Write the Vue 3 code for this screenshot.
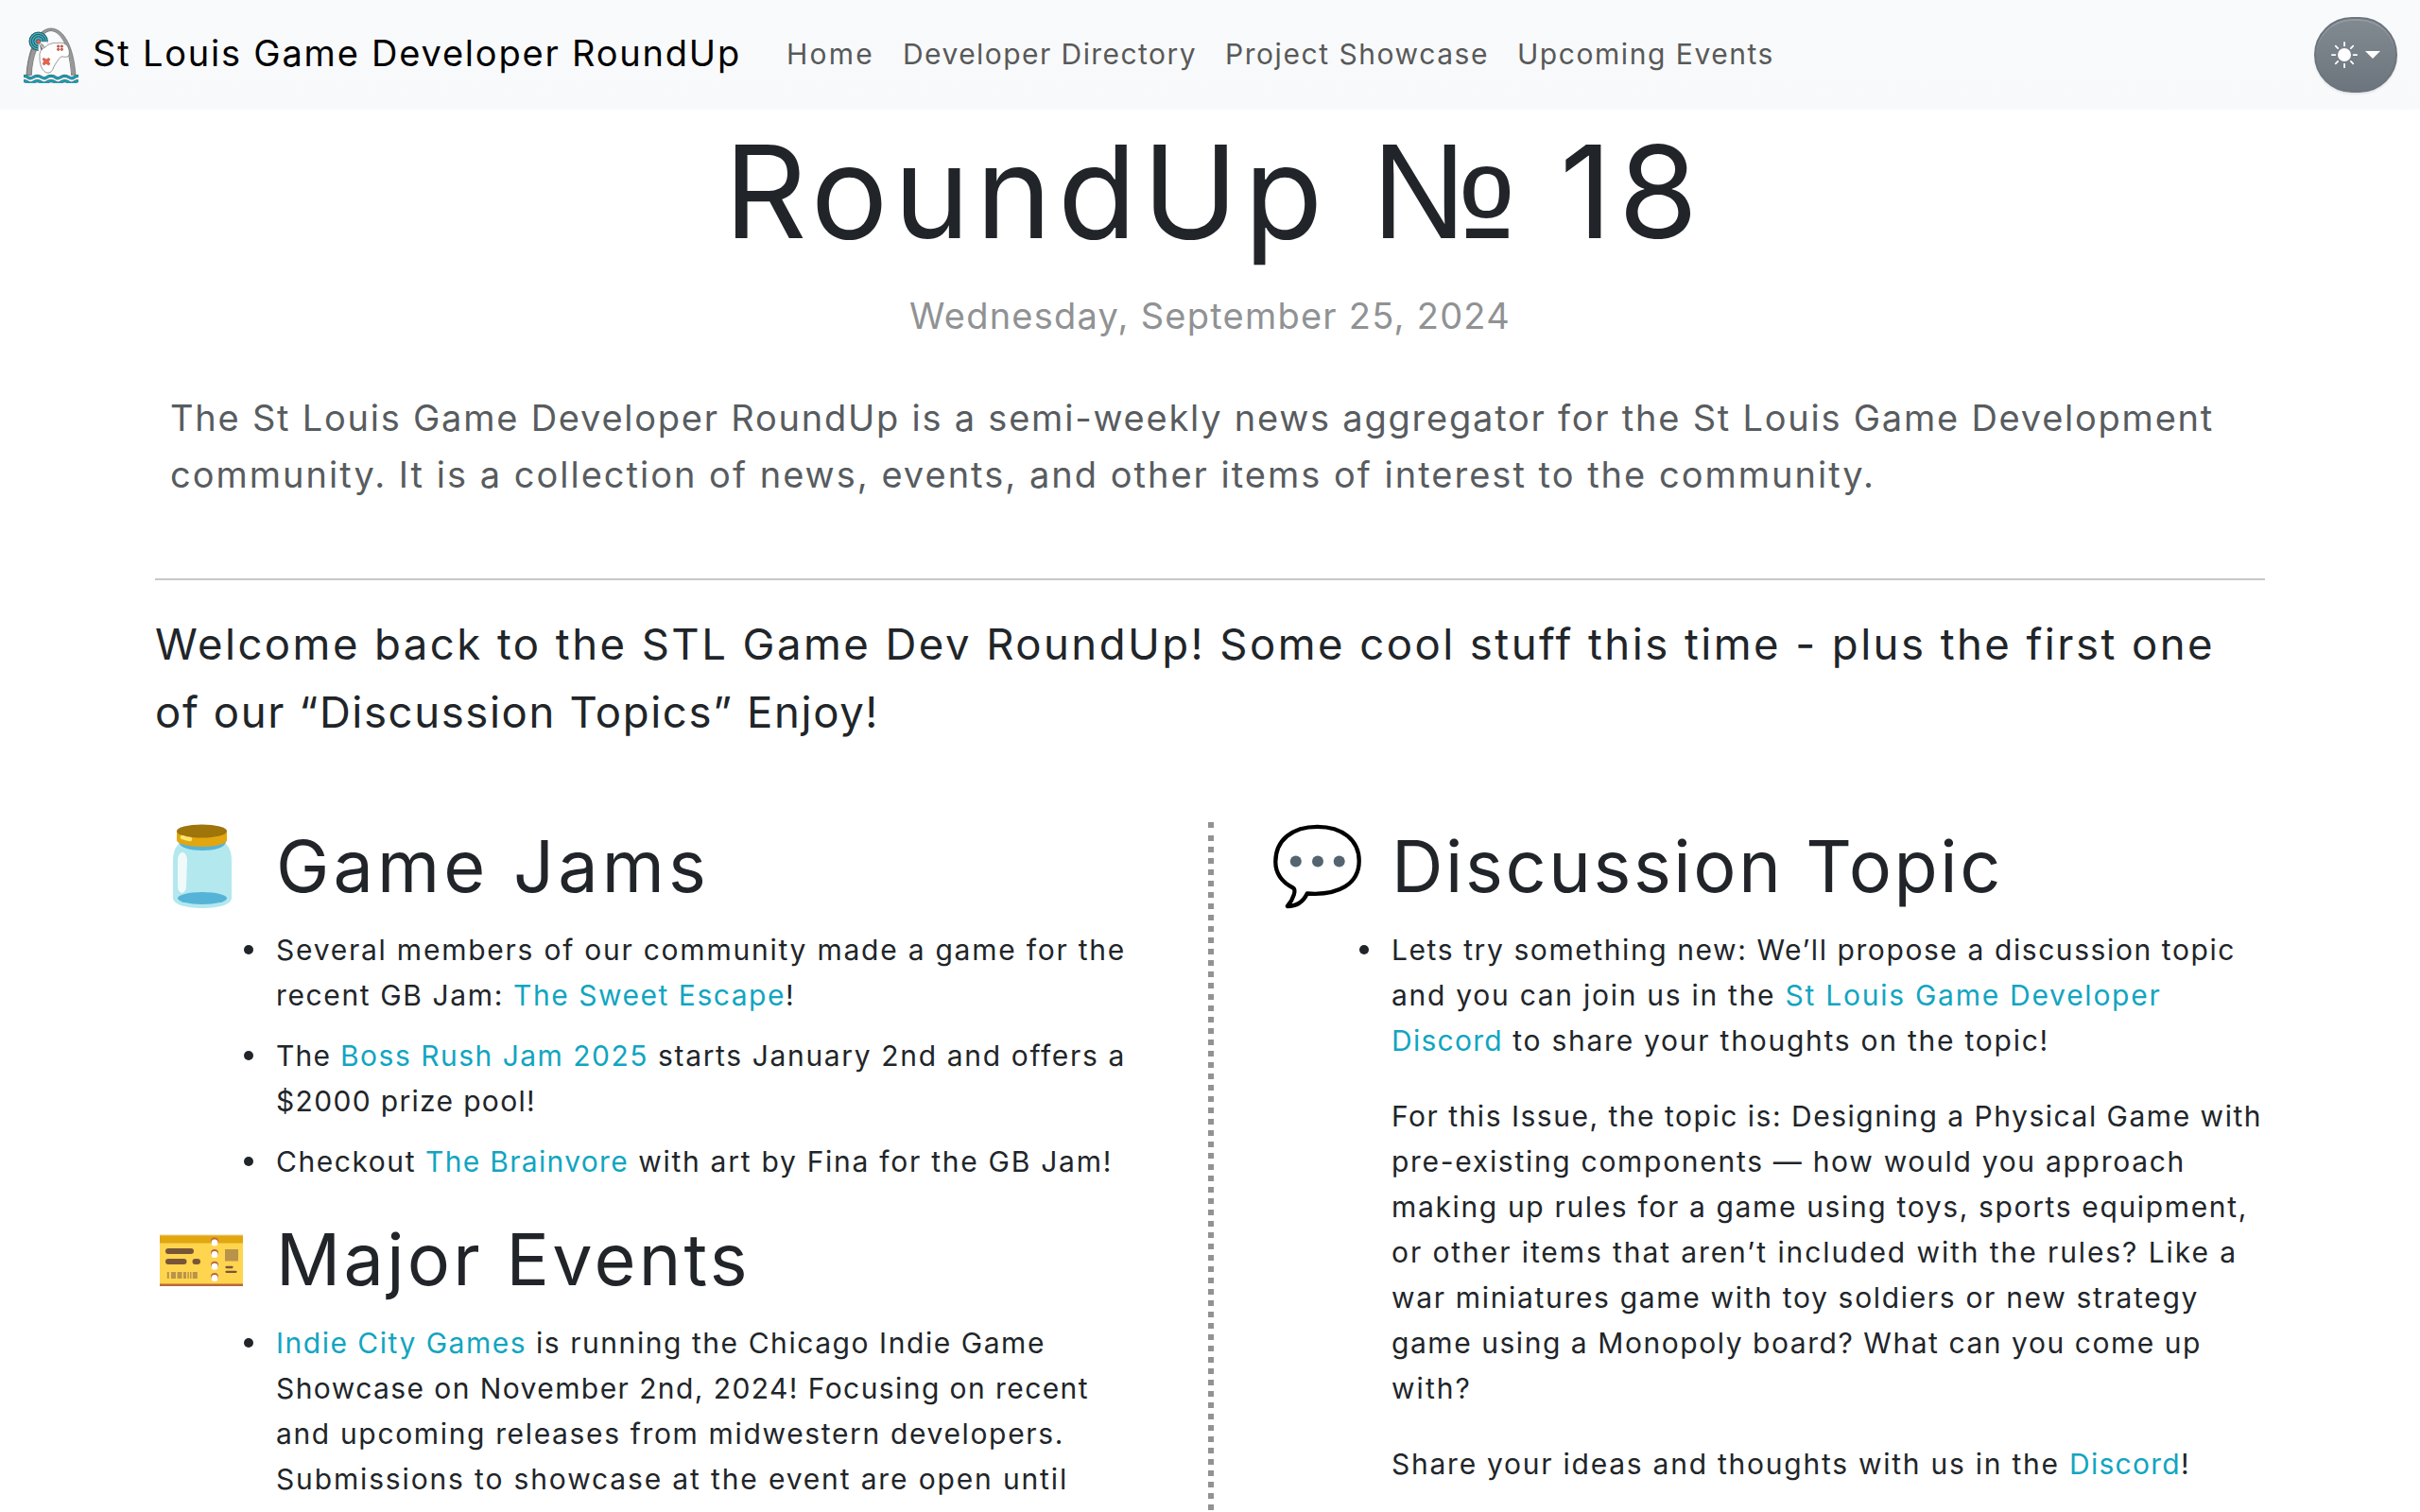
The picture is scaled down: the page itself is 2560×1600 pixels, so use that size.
<script setup>
const nav = [
  { label: 'Home', width: 93 },
  { label: 'Developer Directory', width: 311 },
  { label: 'Project Showcase', width: 279 },
  { label: 'Upcoming Events', width: 272 },
]

const title = [
  { text: 'RoundUp ', width: 684 },
  { text: '№ ', width: 200, sign: true },
  { text: '18', width: 153 },
]

const intro = [
  { text: 'The St Louis Game Developer RoundUp is a semi-weekly news aggregator for the St Louis Game Development', width: 2162 },
  { text: 'community. It is a collection of news, events, and other items of interest to the community.', width: 1804 },
]

const welcome = [
  { text: 'Welcome back to the STL Game Dev RoundUp! Some cool stuff this time - plus the first one', width: 2179 },
  { text: 'of our “Discussion Topics” Enjoy!', width: 766 },
]

const t = (text, width) => ({ text, width })
const a = (text, width) => ({ text, width, link: true })

// Each item holds paragraphs, each paragraph lines, each line its runs of text.
const jams = [
  [[
    [t('Several members of our community made a game for the', 899)],
    [t('recent GB Jam: ', 251), a('The Sweet Escape', 288), t('!', 9)],
  ]],
  [[
    [t('The ', 68), a('Boss Rush Jam 2025', 326), t(' starts January 2nd and offers a', 505)],
    [t('$2000 prize pool!', 275)],
  ]],
  [[
    [t('Checkout ', 158), a('The Brainvore', 215), t(' with art by Fina for the GB Jam!', 512)],
  ]],
]
const events = [
  [[
    [a('Indie City Games', 265), t(' is running the Chicago Indie Game', 549)],
    [t('Showcase on November 2nd, 2024! Focusing on recent', 860)],
    [t('and upcoming releases from midwestern developers.', 834)],
    [t('Submissions to showcase at the event are open until', 838)],
  ]],
]
const topic = [
  [
    [
      [t('Lets try something new: We’ll propose a discussion topic', 893)],
      [t('and you can join us in the ', 416.5), a('St Louis Game Developer', 398)],
      [a('Discord', 118), t(' to share your thoughts on the topic!', 578)],
    ],
    [
      [t('For this Issue, the topic is: Designing a Physical Game with', 921)],
      [t('pre-existing components — how would you approach', 840)],
      [t('making up rules for a game using toys, sports equipment,', 906)],
      [t('or other items that aren’t included with the rules? Like a', 895)],
      [t('war miniatures game with toy soldiers or new strategy', 854)],
      [t('game using a Monopoly board? What can you come up', 857)],
      [t('with?', 85)],
    ],
    [
      [t('Share your ideas and thoughts with us in the ', 717), a('Discord', 118), t('!', 9)],
    ],
  ],
]

const columns = [
  [
    { icon: 'jar', heading: 'Game Jams', width: 459, items: jams },
    { icon: 'ticket', heading: 'Major Events', width: 502, items: events },
  ],
  [{ icon: 'bubble', heading: 'Discussion Topic', width: 647, items: topic }],
]

// Tracks a run of text out so that it fills the given width.
const vFit = {
  mounted(el, { value }) {
    const natural = el.getBoundingClientRect().width
    el.style.letterSpacing = `${(value - natural) / [...el.textContent].length}px`
  },
}
</script>

<template>
  <div class="page">
    <header class="navbar">
      <svg class="logo" viewBox="72 54 180 180">
        <path d="M84 208C90 118 122 60 162 60s72 58 78 148h-15C220 128 196 70 162 69S104 128 100 208z" fill="#999" stroke="#444" stroke-width="1.5" />
        <path d="M101 207C104 128 128 70 162 70s58 58 63 137z" fill="#fafbfc" />
        <circle cx="122" cy="101" r="30" fill="#2796a8" />
        <g fill="none" stroke="#173d47" stroke-width="2">
          <circle cx="122" cy="101" r="29" />
          <circle cx="122" cy="101" r="22" />
          <circle cx="122" cy="101" r="15" />
        </g>
        <g fill="none" stroke="#8cc6d0" stroke-width="1.6">
          <circle cx="122" cy="101" r="25" />
          <circle cx="122" cy="101" r="18" />
          <circle cx="122" cy="101" r="11" />
        </g>
        <path d="M122 103L153 103 150 116 134 133 122 132z" fill="#fafbfc" />
        <path d="M84 208C87 172 93 148 102 126l14 4C107 150 102 176 100 208z" fill="#999" stroke="#555" stroke-width="1.2" />
        <path d="M123 103l9 27M125 103l19 19M132 110l-2 17M137 112l-4 16 14-8" fill="none" stroke="#444" stroke-width="1.8" />
        <path d="M145 119c8-9 23-14 34-12 13-3 28 0 33 7 8 9 11 30 4 35-8 5-19-2-24 2-6 7-17 21-23 35-4 13-14 18-23 14-15-7-21-30-20-52-2-13 7-24 19-29z" fill="#fff" stroke="#555" stroke-width="1.8" />
        <path d="M138 154l9 5 8-5 4 5-5 6 5 8-5 4-7-5-8 5-4-5 5-7-5-7z" fill="#ef604b" stroke="#7b382e" stroke-width="1.2" />
        <g fill="#ef604b" stroke="#7b382e" stroke-width="1.5">
          <circle cx="185" cy="117" r="3.7" /><circle cx="196" cy="117" r="3.7" />
          <circle cx="185" cy="127" r="3.7" /><circle cx="196" cy="127" r="3.7" />
          <circle cx="122" cy="102" r="6" />
        </g>
        <g fill="none" stroke="#425d65" stroke-width="9.5">
          <path d="M75 211q8 0 14.5 5t14.5 0 14.5-5 14.5 5 14.5 0 14.5-5 14.5 5 14.5 0 14.5-5 14.5 5 14.5 0 14-5" />
          <path d="M75 227q8 0 14.5 5t14.5 0 14.5-5 14.5 5 14.5 0 14.5-5 14.5 5 14.5 0 14.5-5 14.5 5 14.5 0 14-5" />
        </g>
        <g fill="none" stroke="#189eb4" stroke-width="7">
          <path d="M75 211q8 0 14.5 5t14.5 0 14.5-5 14.5 5 14.5 0 14.5-5 14.5 5 14.5 0 14.5-5 14.5 5 14.5 0 14-5" />
          <path d="M75 227q8 0 14.5 5t14.5 0 14.5-5 14.5 5 14.5 0 14.5-5 14.5 5 14.5 0 14.5-5 14.5 5 14.5 0 14-5" />
        </g>
      </svg>
      <a class="brand"><span v-fit="686">St Louis Game Developer RoundUp</span></a>
      <nav class="links">
        <a v-for="n in nav" :key="n.label"><span v-fit="n.width">{{ n.label }}</span></a>
      </nav>
      <button class="theme">
        <svg class="sun" viewBox="0 0 16 16">
          <circle cx="8" cy="8" r="4" fill="#fff" />
          <path d="M8 .5v2M8 13.5v2M.5 8h2M13.5 8h2M2.7 2.7l1.4 1.4M11.9 11.9l1.4 1.4M2.7 13.3l1.4-1.4M11.9 4.1l1.4-1.4" stroke="#fff" stroke-linecap="round" />
        </svg>
        <span class="caret"></span>
      </button>
    </header>

    <main class="content">
      <h1><span v-for="w in title" :key="w.text" v-fit="w.width" :class="{ sign: w.sign }">{{ w.text }}</span></h1>
      <p class="date"><span v-fit="636">Wednesday, September 25, 2024</span></p>
      <p class="intro">
        <span v-for="l in intro" :key="l.text" class="line"><span v-fit="l.width">{{ l.text }}</span></span>
      </p>
      <hr />
      <p class="welcome">
        <span v-for="l in welcome" :key="l.text" class="line"><span v-fit="l.width">{{ l.text }}</span></span>
      </p>

      <div class="columns">
        <div v-for="(col, c) in columns" :key="c" class="column">
          <section v-for="s in col" :key="s.heading">
            <h2>
              <svg v-if="s.icon === 'jar'" viewBox="0 0 96 96">
                <path d="M26 22C20 28 19 34 19 42v38c0 7 13 11 31 11s31-4 31-11V42c0-8-1-14-7-20z" fill="#b2e8ee" />
                <path d="M25 21c1 6 12 9 25 9s24-3 25-9z" fill="#55b3d8" />
                <path d="M23 10h53v9c0 4-12 7-26 7s-27-3-27-7z" fill="#e2a610" />
                <ellipse cx="49.5" cy="9.500" rx="26.5" ry="7" fill="#9e740b" />
                <path d="M29 16q5 2 8 2" stroke="#ffe36c" stroke-width="4.5" stroke-linecap="round" fill="none" />
                <ellipse cx="50" cy="80.500" rx="26" ry="6.5" fill="#55b3d8" />
                <path d="M24 41c0-12 10-12 10 0l-1 27c0 9-9 9-9 0z" fill="#f0fafb" />
              </svg>
              <svg v-else-if="s.icon === 'ticket'" viewBox="0 0 96 96">
                <path d="M5 21h88v54H5z" fill="#ffd54f" />
                <path d="M5 21h88v8.5H5z" fill="#e2a610" />
                <path d="M5 72.5h88V75H5z" fill="#b8683a" />
                <path d="M5 21h88" stroke="#efd17c" stroke-width="1" />
                <g stroke="#795538" stroke-width="6" stroke-linecap="round">
                  <path d="M14 38h24M14 49h16.500M42.500 49h2.500" />
                  <path d="M75.500 55h6M75.500 59.800h10" stroke-width="2.300" />
                </g>
                <path d="M74 36h14v12.500H74z" fill="#b89349" />
                <path d="M12.800 60h2v7h-2zM17 60h5v7h-5zM23.500 60h5v7h-5zM30 60h3v7h-3zM34.300 60h1.500v7h-1.500zM37 60h1.500v7H37zM39.800 60h5v7h-5z" fill="#b89349" />
                <g fill="#b8683a">
                  <circle cx="63" cy="27.500" r="4" /><circle cx="63" cy="40" r="4" />
                  <circle cx="63" cy="52.700" r="4" /><circle cx="63" cy="65" r="4" />
                </g>
                <g fill="#fff">
                  <circle cx="63" cy="29" r="3.500" /><circle cx="63" cy="41.500" r="3.500" />
                  <circle cx="63" cy="54.200" r="3.500" /><circle cx="63" cy="66.500" r="3.500" />
                </g>
              </svg>
              <svg v-else viewBox="0 0 96 96">
                <path d="M49.500 4.800C23 4.800 5.300 19 5.300 42c0 13 7 21.500 18.500 27.500 3.500 1.800 1 11.500-6 19.500 9.500 0 16.500-4 21-13.500C72.500 78 93.700 65 93.700 41 93.700 19 76 4.800 49.500 4.800z" fill="#fff" stroke="#000" stroke-width="4.300" stroke-linejoin="round" />
                <g fill="#546570"><circle cx="26.800" cy="41.500" r="6" /><circle cx="50" cy="41.500" r="6" /><circle cx="72.700" cy="41.500" r="6" /></g>
              </svg>
              <span v-fit="s.width">{{ s.heading }}</span>
            </h2>
            <ul>
              <li v-for="(item, i) in s.items" :key="i">
                <div class="body">
                  <p v-for="(p, j) in item" :key="j">
                    <span v-for="(line, k) in p" :key="k" class="line"><template v-for="r in line" :key="r.text"><a v-if="r.link" v-fit="r.width" class="link">{{ r.text }}</a><span v-else v-fit="r.width">{{ r.text }}</span></template></span>
                  </p>
                </div>
              </li>
            </ul>
          </section>
        </div>
      </div>
    </main>
  </div>
</template>

<style>
body { margin: 0; background: #fff; }
</style>

<style scoped>
.page {
  display: flex;
  flex-direction: column;
  height: 1600px;
  overflow: hidden;
  color: #212529;
  font-family: Inter, "Liberation Sans", sans-serif;
  font-size: 30px;
  line-height: 48px;
}
.page * { box-sizing: border-box; }
h1, h2, p, ul { margin: 0; padding: 0; font-weight: 400; }
span, a { white-space: pre; }
.line { display: block; }

.navbar {
  display: flex;
  align-items: center;
  flex: none;
  height: 116px;
  padding: 0 24px;
  background: linear-gradient(180deg, #f9fafb, #f8f9fa);
}
.logo { width: 60px; height: 60px; }
.brand {
  width: 748px;
  padding: 0 0 4px 14px;
  color: #000;
  font-size: 38px;
}
.links { display: flex; gap: 30px; padding-bottom: 3px; color: #585959; }
.links a { display: block; }
.theme {
  display: flex;
  align-items: center;
  width: 88px;
  height: 80px;
  margin-left: auto;
  padding: 0 0 0 16px;
  border: 2px solid #6c757d;
  border-radius: 40px;
  background: linear-gradient(180deg, #828a91, #6c757d);
  box-shadow: inset 0 2px 0 rgba(255, 255, 255, .15), 0 2px 2px rgba(0, 0, 0, .075);
}
.sun { width: 28px; height: 28px; }
.caret {
  margin-left: 8px;
  border-top: 8.4px solid #fff;
  border-right: 8.4px solid transparent;
  border-left: 8.4px solid transparent;
}

.content {
  display: flex;
  flex-direction: column;
  flex: 1;
  min-height: 0;
  padding: 8px 164px 0;
}
h1 {
  height: 158px;
  padding-left: 9px;
  font-size: 136px;
  line-height: 158px;
  text-align: center;
  white-space: nowrap;
}
.sign { font-family: "Liberation Sans", sans-serif; font-size: 144px; line-height: 1; }
.date {
  margin-top: 22px;
  color: #909294;
  font-size: 38px;
  line-height: 60px;
  text-align: center;
}
.intro {
  margin-top: 48px;
  padding: 0 16px;
  color: #585c5f;
  font-size: 38px;
  line-height: 60px;
}
hr {
  width: 100%;
  margin: 80px 0 32px;
  border: 0;
  border-top: 2px solid #c8c8c9;
}
.welcome { font-size: 45.5px; line-height: 72px; }

.columns {
  display: flex;
  flex: 1;
  min-height: 0;
  margin-top: 80px;
}
.column:first-child {
  width: 1120px;
  background:
    linear-gradient(#909294, #909294) right 0 top 0 / 6px 6px no-repeat,
    repeating-linear-gradient(180deg, #909294 0 6px, transparent 6px 12px) right 0 top 14px / 6px 1200px no-repeat;
}
.column:last-child { padding-left: 60px; }
section { margin-bottom: 33px; }
h2 {
  display: flex;
  gap: 32px;
  font-size: 75.5px;
  line-height: 94px;
}
h2 svg { flex: none; width: 96px; height: 96px; }
ul { margin-top: 15px; padding-left: 94px; list-style: none; }
li { display: flex; }
li + li { margin-top: 16px; }
li::before {
  content: "";
  flex: none;
  width: 10px;
  height: 10px;
  margin: 19px 24px 0 0;
  border-radius: 50%;
  background: #212529;
}
.body { display: flex; flex-direction: column; gap: 32px; }
.link { color: #11a5c1; }
</style>
